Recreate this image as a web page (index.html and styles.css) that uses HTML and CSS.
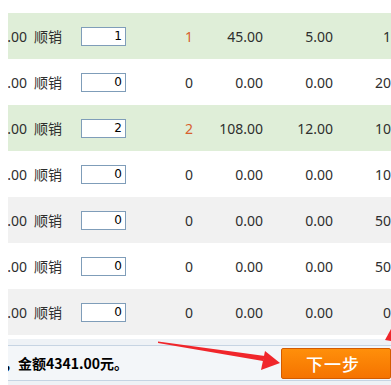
FILE: index.html
```html
<!DOCTYPE html>
<html lang="zh">
<head>
<meta charset="utf-8">
<link rel="stylesheet" href="styles.css">
</head>
<body>
<div class="clip">
  <div class="table">
    <div class="row green">
      <span class="c0">0.00</span><span class="c1">顺销</span><span class="c2"><input class="qty" value="1"></span>
      <span class="c3 hl">1</span><span class="c4">45.00</span><span class="c5">5.00</span><span class="c6">1.00</span>
    </div>
    <div class="row">
      <span class="c0">0.00</span><span class="c1">顺销</span><span class="c2"><input class="qty" value="0"></span>
      <span class="c3">0</span><span class="c4">0.00</span><span class="c5">0.00</span><span class="c6">200.00</span>
    </div>
    <div class="row green">
      <span class="c0">0.00</span><span class="c1">顺销</span><span class="c2"><input class="qty" value="2"></span>
      <span class="c3 hl">2</span><span class="c4">108.00</span><span class="c5">12.00</span><span class="c6">108.00</span>
    </div>
    <div class="row">
      <span class="c0">0.00</span><span class="c1">顺销</span><span class="c2"><input class="qty" value="0"></span>
      <span class="c3">0</span><span class="c4">0.00</span><span class="c5">0.00</span><span class="c6">100.00</span>
    </div>
    <div class="row gray">
      <span class="c0">0.00</span><span class="c1">顺销</span><span class="c2"><input class="qty" value="0"></span>
      <span class="c3">0</span><span class="c4">0.00</span><span class="c5">0.00</span><span class="c6">500.00</span>
    </div>
    <div class="row">
      <span class="c0">0.00</span><span class="c1">顺销</span><span class="c2"><input class="qty" value="0"></span>
      <span class="c3">0</span><span class="c4">0.00</span><span class="c5">0.00</span><span class="c6">500.00</span>
    </div>
    <div class="row gray">
      <span class="c0">0.00</span><span class="c1">顺销</span><span class="c2"><input class="qty" value="0"></span>
      <span class="c3">0</span><span class="c4">0.00</span><span class="c5">0.00</span><span class="c6">0.00</span>
    </div>
  </div>
  <div class="footer">
    <div class="bar">
      <span class="total">，金额4341.00元。</span>
      <button class="next">下一步</button>
    </div>
  </div>
</div>
<svg class="arrows" width="391" height="385" viewBox="0 0 391 385">
  <polygon points="158,341.5 265,356 263,361 158,343" fill="#f0262b"/>
  <polygon points="265,351 280,363 261,370" fill="#f0262b"/>
  <polygon points="391,329 385,340 391,341" fill="#f0262b"/>
</svg>
</body>
</html>
```

FILE: styles.css
```css
html, body {
  margin: 0;
  padding: 0;
  background: #ffffff;
}
body {
  width: 391px;
  height: 385px;
  overflow: hidden;
  position: relative;
  font-family: "Noto Sans", "Noto Sans CJK SC", sans-serif;
  font-size: 14px;
  color: #2e2e2e;
}
.clip {
  margin-left: 8px;
  padding-top: 13px;
  width: 383px;
  overflow: hidden;
}
.table {
  width: 460px;
}
.row {
  display: grid;
  grid-template-columns: 19px 54px 57px 55px 70px 70px 128px;
  align-items: center;
  height: 46px;
  background: #ffffff;
}
.row.green { background: #dfeed8; }
.row.gray { background: #f1f1f1; }
.c0 {
  text-align: right;
  white-space: nowrap;
  direction: rtl;
}
.c1 { padding-left: 7px; white-space: nowrap; }
.c2 { display: flex; }
.qty {
  box-sizing: border-box;
  width: 45px;
  height: 19px;
  margin: 0;
  padding: 0 3px 0 0;
  border: 1px solid #7f9db9;
  background: #ffffff;
  text-align: right;
  font-family: "DejaVu Sans", sans-serif;
  font-size: 12px;
  color: #000000;
}
.c3, .c4, .c5 { text-align: right; }
.c3.hl { color: #d8602e; }
.c6 { text-align: center; }
.footer {
  margin-top: 4px;
  padding-top: 6px;
  background: #eef2f6;
  height: 46px;
}
.bar {
  display: grid;
  grid-template-columns: 273px 110px;
  align-items: center;
  height: 34px;
  border-top: 1px solid #c6d4e3;
  border-bottom: 1px solid #c6d4e3;
  background: #f3f6f9;
}
.total {
  font-family: "Noto Sans CJK SC", sans-serif;
  font-weight: bold;
  font-size: 14px;
  color: #000000;
  margin-left: -4px;
  white-space: nowrap;
}
.next {
  box-sizing: border-box;
  width: 110px;
  height: 31px;
  margin: 0;
  padding: 0 6px 0 0;
  border: 1px solid #d35b00;
  border-radius: 2px;
  background: linear-gradient(#ff8f0a, #f57300);
  color: #ffffff;
  font-family: "Noto Sans CJK SC", sans-serif;
  font-size: 17px;
  font-weight: 500;
  letter-spacing: 1px;
}
.arrows {
  position: absolute;
  left: 0;
  top: 0;
  pointer-events: none;
}
```
